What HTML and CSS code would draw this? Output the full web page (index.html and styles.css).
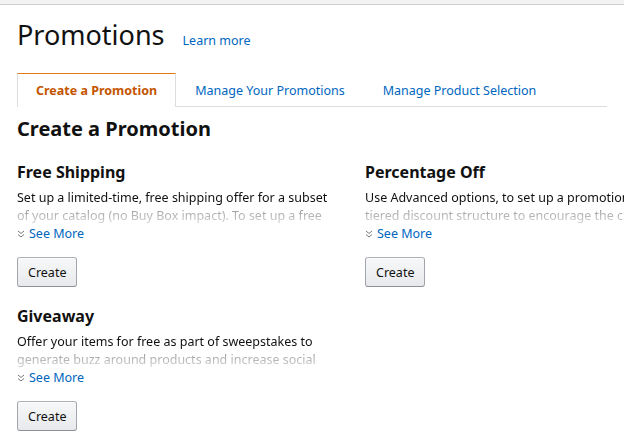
FILE: index.html
```html
<!DOCTYPE html>
<html>
<head>
<meta charset="utf-8">
<link rel="stylesheet" href="styles.css">
</head>
<body>
<div class="topbar"></div>
<div class="page">
  <div class="title-row">
    <h1 class="title">Promotions</h1>
    <a class="link learn" href="#">Learn more</a>
  </div>
  <ul class="tabs">
    <li class="tab active">Create a Promotion</li>
    <li class="tab">Manage Your Promotions</li>
    <li class="tab">Manage Product Selection</li>
  </ul>
  <h2 class="section-title">Create a Promotion</h2>
  <div class="grid">
    <div class="card">
      <h3 class="card-title">Free Shipping</h3>
      <p class="desc">Set up a limited-time, free shipping offer for a subset of your catalog (no Buy Box impact). To set up a free shipping promotion, select products and define the shipping speeds.</p>
      <a class="link more" href="#"><svg class="chev" width="8" height="8" viewBox="0 0 8 8"><path d="M1 1 L4 3.5 L7 1 M1 4.5 L4 7 L7 4.5" fill="none" stroke="#777" stroke-width="1"/></svg><span>See More</span></a>
      <button class="btn">Create</button>
    </div>
    <div class="card">
      <h3 class="card-title">Percentage Off</h3>
      <p class="desc">Use Advanced options, to set up a promotion with a tiered discount structure to encourage the customer to buy more.</p>
      <a class="link more" href="#"><svg class="chev" width="8" height="8" viewBox="0 0 8 8"><path d="M1 1 L4 3.5 L7 1 M1 4.5 L4 7 L7 4.5" fill="none" stroke="#777" stroke-width="1"/></svg><span>See More</span></a>
      <button class="btn">Create</button>
    </div>
    <div class="card">
      <h3 class="card-title">Giveaway</h3>
      <p class="desc">Offer your items for free as part of sweepstakes to generate buzz around products and increase social media following.</p>
      <a class="link more" href="#"><svg class="chev" width="8" height="8" viewBox="0 0 8 8"><path d="M1 1 L4 3.5 L7 1 M1 4.5 L4 7 L7 4.5" fill="none" stroke="#777" stroke-width="1"/></svg><span>See More</span></a>
      <button class="btn">Create</button>
    </div>
  </div>
</div>
</body>
</html>
```
FILE: styles.css
```css
html, body {
  margin: 0;
  padding: 0;
  background: #fff;
  overflow: hidden;
}
body {
  font-family: "Noto Sans", "Liberation Sans", sans-serif;
  font-size: 12.5px;
  line-height: 18px;
  color: #111;
  width: 624px;
  height: 437px;
}
.topbar {
  height: 4px;
  background: #f3f3f3;
  border-bottom: 1px solid #cfcfcf;
}
.page {
  padding: 0 17px;
  width: 800px;
}
.title-row {
  display: flex;
  align-items: baseline;
  gap: 18px;
  margin-top: 12px;
}
.title {
  margin: 0;
  font-size: 27px;
  line-height: 36px;
  font-weight: 400;
}
.learn {
  font-size: 12.5px;
}
.link {
  color: #0066c0;
  text-decoration: none;
}
.tabs {
  list-style: none;
  margin: 20px 0 0;
  padding: 0;
  display: flex;
  border-bottom: 1px solid #ddd;
  width: 590px;
}
.tab {
  padding: 8px 18px 6px;
  line-height: 18px;
  color: #0066c0;
  border: 1px solid transparent;
  border-bottom: none;
  margin-bottom: -1px;
}
.tab.active {
  color: #c45500;
  font-weight: 700;
  border-color: #ddd;
  border-top: 1px solid #e47911;
  background: #fff;
  padding-bottom: 7px;
}
.section-title {
  margin: 9px 0 0;
  font-size: 20px;
  line-height: 26px;
  font-weight: 700;
}
.grid {
  display: grid;
  grid-template-columns: 320px 320px;
  column-gap: 28px;
  row-gap: 17px;
  margin-top: 18px;
}
.card {
  display: flex;
  flex-direction: column;
  align-items: flex-start;
}
.card-title {
  margin: 0 0 5px;
  font-size: 16px;
  line-height: 24px;
  font-weight: 700;
}
.desc {
  margin: 0;
  height: 36px;
  overflow: hidden;
  -webkit-mask-image: linear-gradient(to bottom, #000 48%, rgba(0,0,0,0.4) 60%, rgba(0,0,0,0.15) 100%);
  mask-image: linear-gradient(to bottom, #000 48%, rgba(0,0,0,0.4) 60%, rgba(0,0,0,0.15) 100%);
}
.more {
  display: flex;
  align-items: center;
  gap: 4px;
}
.chev {
  display: block;
}
.btn {
  margin-top: 14px;
  height: 30px;
  padding: 0 10px;
  font-family: inherit;
  font-size: 12.5px;
  color: #111;
  border: 1px solid #adb1b8;
  border-color: #adb1b8 #a2a6ac #8d9096;
  border-radius: 3px;
  background: linear-gradient(to bottom, #f7f8fa, #e7e9ec);
  box-shadow: inset 0 1px 0 rgba(255,255,255,0.6);
}
```
